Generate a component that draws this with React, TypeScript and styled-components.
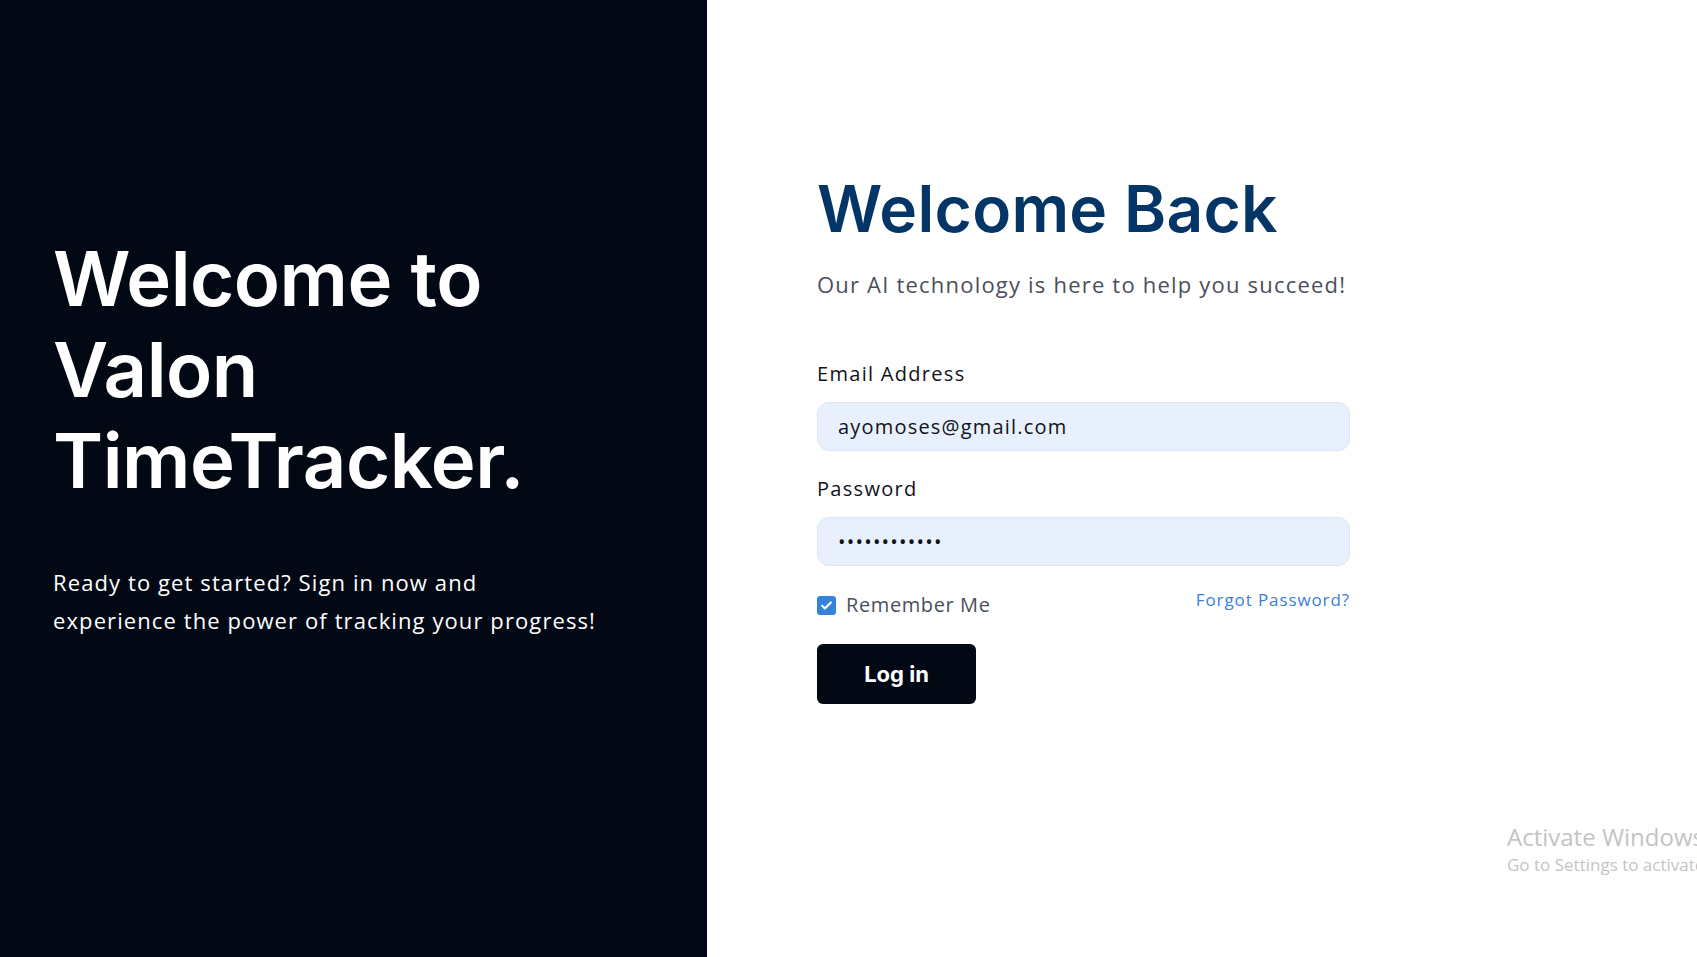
import React from "react";
import styled, { createGlobalStyle } from "styled-components";

const Global = createGlobalStyle`
  html, body { margin: 0; padding: 0; }
  body { font-family: "Open Sans", "Noto Sans", sans-serif; background: #ffffff; }
  * { box-sizing: border-box; }
`;

const Page = styled.div`
  display: flex;
  width: 1697px;
  height: 957px;
  overflow: hidden;
  position: relative;
`;

const Hero = styled.section`
  width: 707px;
  flex: 0 0 707px;
  background: #020814;
  color: #ffffff;
  display: flex;
  flex-direction: column;
  padding: 233px 0 0 53px;
`;

const HeroTitle = styled.h1`
  margin: 0;
  font-family: Inter, "Noto Sans", sans-serif;
  font-weight: 600;
  font-size: 76px;
  line-height: 91px;
  letter-spacing: -0.5px;
`;

const HeroText = styled.p`
  margin: 57px 0 0;
  font-family: "Open Sans", "Noto Sans", sans-serif;
  font-size: 22px;
  line-height: 38px;
  letter-spacing: 1.1px;
  color: #ffffff;
`;

const Side = styled.section`
  flex: 1;
  background: #ffffff;
  padding: 170px 0 0 110px;
`;

const Form = styled.form`
  width: 533px;
  display: flex;
  flex-direction: column;
`;

const Title = styled.h2`
  margin: 0;
  font-family: Inter, "Noto Sans", sans-serif;
  font-weight: 600;
  font-size: 64px;
  line-height: 78px;
  color: #033566;
  letter-spacing: 0.3px;
`;

const Subtitle = styled.p`
  margin: 20px 0 0;
  font-size: 22px;
  line-height: 32px;
  letter-spacing: 1.2px;
  color: #4b4f5c;
`;

const Label = styled.label<{ $top: number }>`
  display: block;
  margin-top: ${(p) => p.$top}px;
  font-size: 20px;
  line-height: 28px;
  font-weight: 500;
  letter-spacing: 1.3px;
  color: #111318;
`;

const Input = styled.input`
  margin-top: 14px;
  height: 49px;
  width: 100%;
  border: 1px solid #dfe7f5;
  border-radius: 12px;
  background: #e8f0fe;
  padding: 0 20px;
  font-family: "Open Sans", "Noto Sans", sans-serif;
  font-size: 20px;
  letter-spacing: 1.2px;
  color: #111318;
  outline: none;
`;

const Row = styled.div`
  margin-top: 27px;
  display: flex;
  justify-content: space-between;
  align-items: flex-start;
`;

const Check = styled.label`
  display: flex;
  align-items: center;
  gap: 10px;
  font-size: 20px;
  line-height: 24px;
  letter-spacing: 0.6px;
  color: #4b4f5c;
`;

const Box = styled.span`
  width: 19px;
  height: 19px;
  border-radius: 3px;
  background: #3584dc;
  display: inline-flex;
  align-items: center;
  justify-content: center;
`;

const Forgot = styled.a`
  font-size: 17px;
  line-height: 20px;
  letter-spacing: 0.9px;
  color: #3a7fd5;
  text-decoration: none;
  margin-top: -3px;
`;

const Button = styled.button`
  margin-top: 27px;
  width: 159px;
  height: 60px;
  border: none;
  border-radius: 6px;
  background: #020814;
  color: #ffffff;
  font-family: Inter, Roboto, sans-serif;
  font-weight: 700;
  font-size: 22px;
  cursor: pointer;
`;

const Watermark = styled.div`
  position: absolute;
  left: 1507px;
  top: 820px;
  white-space: nowrap;
  color: #c4c4c4;
  font-family: "Open Sans", "Noto Sans", sans-serif;
  pointer-events: none;
`;

const WmTitle = styled.div`
  font-size: 24px;
  line-height: 33px;
`;

const WmSub = styled.div`
  font-size: 17px;
  line-height: 24px;
`;

export default function App() {
  return (
    <>
      <Global />
      <Page>
        <Hero>
          <HeroTitle>
            Welcome to
            <br />
            Valon
            <br />
            TimeTracker.
          </HeroTitle>
          <HeroText>
            Ready to get started? Sign in now and
            <br />
            experience the power of tracking your progress!
          </HeroText>
        </Hero>
        <Side>
          <Form onSubmit={(e) => e.preventDefault()}>
            <Title>Welcome Back</Title>
            <Subtitle>Our AI technology is here to help you succeed!</Subtitle>
            <Label $top={60} htmlFor="email">Email Address</Label>
            <Input id="email" type="email" defaultValue="ayomoses@gmail.com" />
            <Label $top={24} htmlFor="pw">Password</Label>
            <Input id="pw" type="password" defaultValue="ayomoses1234" />
            <Row>
              <Check>
                <Box>
                  <svg width="13" height="13" viewBox="0 0 24 24" fill="none" stroke="#fff" strokeWidth="4" strokeLinecap="round" strokeLinejoin="round">
                    <path d="M4 12.5l5 5L20 6.5" />
                  </svg>
                </Box>
                Remember Me
              </Check>
              <Forgot href="#">Forgot Password?</Forgot>
            </Row>
            <Button type="submit">Log in</Button>
          </Form>
        </Side>
        <Watermark>
          <WmTitle>Activate Windows</WmTitle>
          <WmSub>Go to Settings to activate Windows.</WmSub>
        </Watermark>
      </Page>
    </>
  );
}
